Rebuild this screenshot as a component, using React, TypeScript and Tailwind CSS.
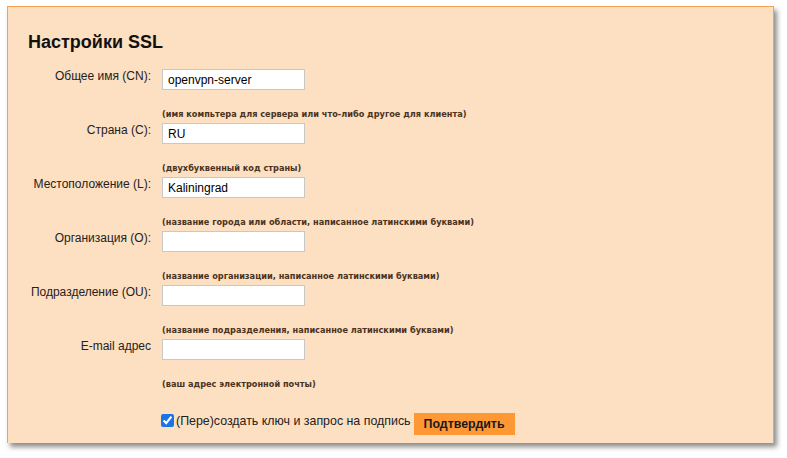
import { useState } from "react";

type Field = {
    label: string;
    value: string;
    hint: string;
};

const fields: Field[] = [
    { label: "Общее имя (CN):", value: "openvpn-server", hint: "(имя компьтера для сервера или что-либо другое для клиента)" },
    { label: "Страна (C):", value: "RU", hint: "(двухбуквенный код страны)" },
    { label: "Местоположение (L):", value: "Kaliningrad", hint: "(название города или области, написанное латинскими буквами)" },
    { label: "Организация (O):", value: "", hint: "(название организации, написанное латинскими буквами)" },
    { label: "Подразделение (OU):", value: "", hint: "(название подразделения, написанное латинскими буквами)" },
    { label: "E-mail адрес", value: "", hint: "(ваш адрес электронной почты)" },
];

const App: React.FC = () => {
    const [values, setValues] = useState<string[]>(fields.map((f) => f.value));
    const [regen, setRegen] = useState<boolean>(true);

    return (
        <div className="w-[787px] h-[458px] bg-white pt-[6px] pl-[7px] font-['Liberation_Sans',Arial,sans-serif] text-[#222]">
            <div className="w-[767px] h-[437px] bg-[#fddfc1] border border-b-0 border-[#f7a151] shadow-[3px_4px_5px_rgba(0,0,0,0.45)] pt-[24px] pl-[20px]">
                <h2 className="text-[18px] leading-[22px] font-bold text-[#111] mb-[16px]">Настройки SSL</h2>

                {fields.map((f, i) => (
                    <div key={i} className="flex flex-col">
                        <div className="flex items-start">
                            <label className="w-[125px] text-right text-[12px] leading-[15px] pr-[2px]">{f.label}</label>
                            <input
                                type="text"
                                value={values[i]}
                                onChange={(e) => {
                                    const next = [...values];
                                    next[i] = e.target.value;
                                    setValues(next);
                                }}
                                className="ml-[9px] w-[143px] h-[21px] bg-white border border-[#c8c8c8] px-[5px] text-[12px] text-black outline-none"
                            />
                        </div>
                        <p className="ml-[134px] mt-[18px] mb-[3px] text-[8.2px] leading-[12px] font-bold text-[#4a3320] font-['DejaVu_Sans',sans-serif]">
                            {f.hint}
                        </p>
                    </div>
                ))}

                <div className="flex items-start ml-[133px] mt-[20px]">
                    <input
                        type="checkbox"
                        checked={regen}
                        onChange={() => setRegen(!regen)}
                        className="w-[13px] h-[13px] mt-[1px] m-0 accent-[#1a73e8]"
                    />
                    <span className="ml-[2px] mt-[1px] text-[12.4px] leading-[15px]">(Пере)создать ключ и запрос на подпись</span>
                    <button className="ml-[3px] w-[101px] h-[22px] bg-[#fd9834] text-[12.4px] font-bold text-[#1a1a1a]">
                        Подтвердить
                    </button>
                </div>
            </div>
        </div>
    );
};

export default App;
